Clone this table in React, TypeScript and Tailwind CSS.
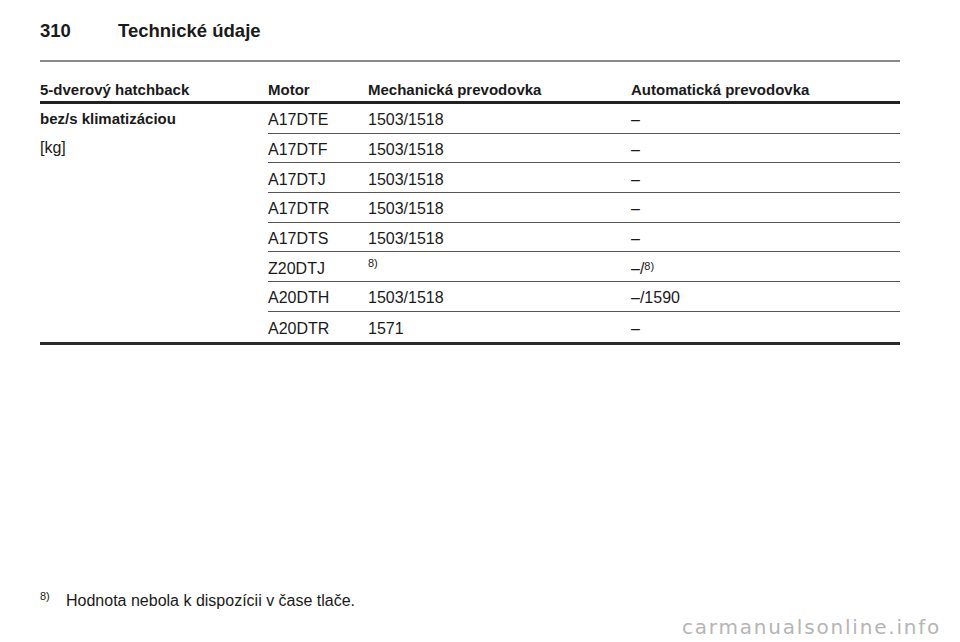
import React from "react";

const rows: { motor: string; mech: React.ReactNode; auto: React.ReactNode }[] = [
  { motor: "A17DTE", mech: "1503/1518", auto: "–" },
  { motor: "A17DTF", mech: "1503/1518", auto: "–" },
  { motor: "A17DTJ", mech: "1503/1518", auto: "–" },
  { motor: "A17DTR", mech: "1503/1518", auto: "–" },
  { motor: "A17DTS", mech: "1503/1518", auto: "–" },
  {
    motor: "Z20DTJ",
    mech: <sup className="text-[11px] relative top-[-7px]">8)</sup>,
    auto: (
      <span>
        –/<sup className="text-[11px] relative top-[-4px]">8)</sup>
      </span>
    ),
  },
  { motor: "A20DTH", mech: "1503/1518", auto: "–/1590" },
  { motor: "A20DTR", mech: "1571", auto: "–" },
];

export default function App() {
  return (
    <div
      className="relative w-[960px] h-[642px] bg-white text-[#1a1a1a] overflow-hidden"
      style={{ fontFamily: '"Liberation Sans", Arial, sans-serif' }}
    >
      <div className="pl-[40px] w-[900px]">
        {/* Title */}
        <div className="flex items-center h-[62px] border-b-2 border-[#8a8a8a] pt-[2px]">
          <span className="w-[78px] text-[18.5px] font-bold">310</span>
          <span className="text-[18.5px] font-bold">Technické údaje</span>
        </div>

        {/* Header row */}
        <div className="grid grid-cols-[228px_100px_263px_1fr] h-[42px] items-end pb-[2px] border-b-[3px] border-[#222] text-[15px] font-bold leading-[18px]">
          <span>5-dverový hatchback</span>
          <span>Motor</span>
          <span>Mechanická prevodovka</span>
          <span>Automatická prevodovka</span>
        </div>

        {/* Body */}
        <div className="grid grid-cols-[228px_1fr] border-b-[3px] border-[#2a2a2a]">
          <div className="flex flex-col pt-[6px]">
            <span className="text-[15px] font-bold leading-[18px]">bez/s klimatizáciou</span>
            <span className="text-[16px] leading-[18px] mt-[11px]">[kg]</span>
          </div>
          <div className="flex flex-col">
            {rows.map((r, i) => (
              <div
                key={r.motor}
                className={`grid grid-cols-[100px_263px_1fr] items-center h-[29.7px] pt-[4px] text-[16px] leading-[18px] ${
                  i < rows.length - 1 ? "border-b border-[#555]" : ""
                }`}
              >
                <span>{r.motor}</span>
                <span>{r.mech}</span>
                <span>{r.auto}</span>
              </div>
            ))}
          </div>
        </div>
      </div>

      {/* Footnote */}
      <div className="absolute left-[40px] top-[590px] flex items-start">
        <span className="text-[11px] w-[26px] leading-[12px]">8)</span>
        <span className="text-[16px] leading-[20px] mt-[1px]">Hodnota nebola k dispozícii v čase tlače.</span>
      </div>

      {/* Watermark */}
      <div
        className="absolute left-[682px] top-[614px] text-[20px] tracking-[1.8px] text-[#b5b5b5] leading-[26px]"
        style={{ fontFamily: '"DejaVu Sans", sans-serif' }}
      >
        carmanualsonline.info
      </div>
    </div>
  );
}
